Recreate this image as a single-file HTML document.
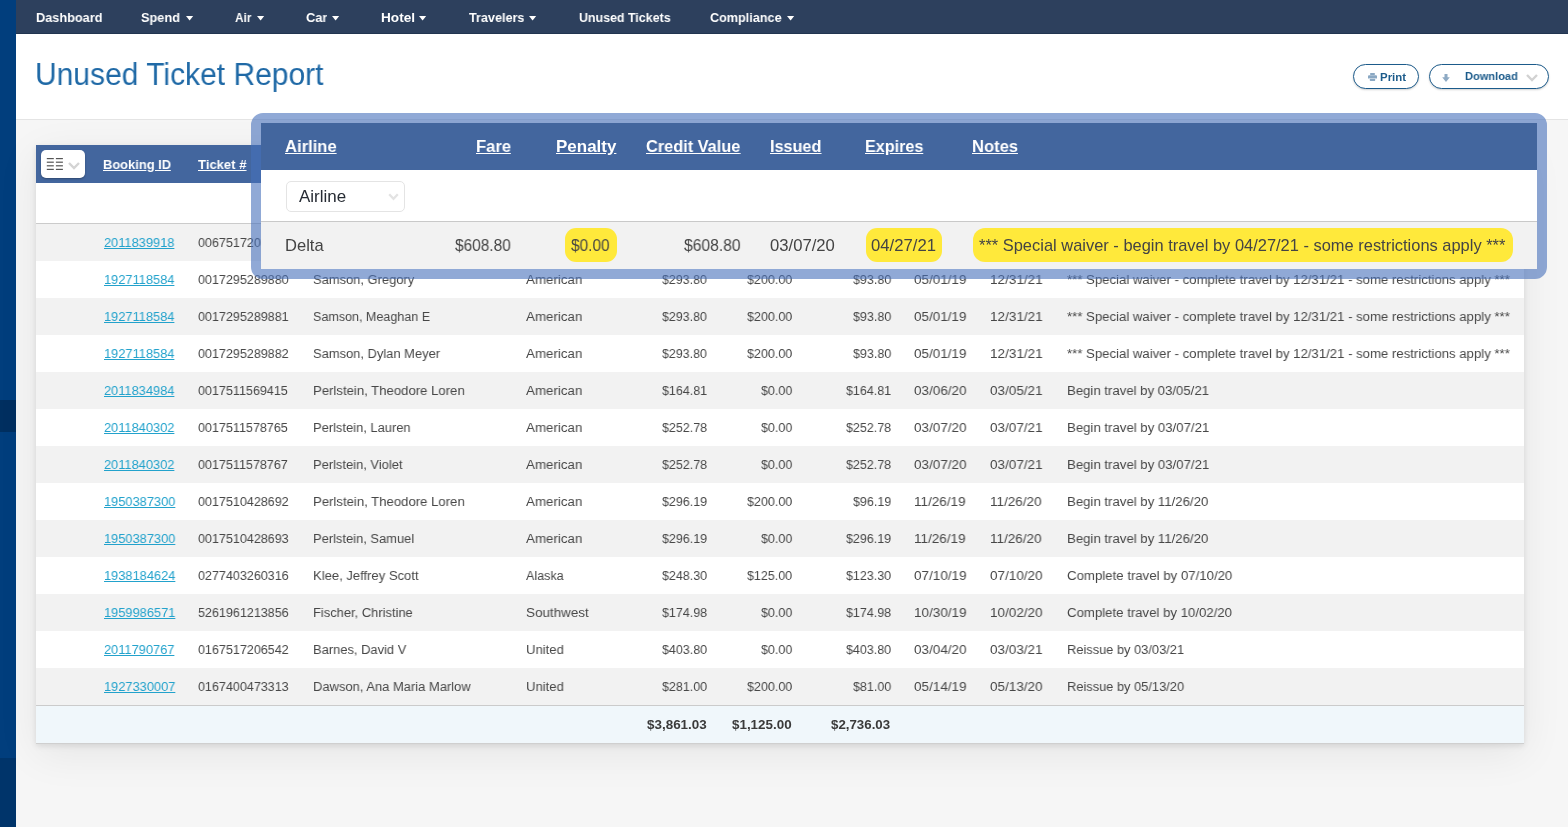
<!DOCTYPE html>
<html><head><meta charset="utf-8"><style>
html,body{margin:0;padding:0;}
body{width:1568px;height:827px;overflow:hidden;position:relative;background:#f6f6f6;font-family:"Liberation Sans",sans-serif;}
.b{position:absolute;}
.t{position:absolute;white-space:nowrap;transform-origin:0 0;will-change:transform;}
</style></head><body>
<div class="b" style="left:0px;top:0px;width:16px;height:827px;background:#013e7d;"></div>
<div class="b" style="left:0px;top:400px;width:16px;height:32px;background:#002f60;"></div>
<div class="b" style="left:0px;top:758px;width:16px;height:69px;background:#00346a;"></div>
<div class="b" style="left:16px;top:0px;width:1552px;height:34px;background:#2d405d;"></div>
<div class="b" style="left:16px;top:33px;width:1552px;height:1px;background:#213550;"></div>
<div class="b" style="left:16px;top:34px;width:1552px;height:85px;background:#fff;"></div>
<div class="b" style="left:16px;top:119px;width:1552px;height:1px;background:#e4e4e4;"></div>
<span class="t" id="t0" style="left:35.56px;top:10.95px;font-size:13.2px;line-height:14.747px;color:#ffffff;font-weight:bold;transform:scaleX(0.9658);">Dashboard</span>
<span class="t" id="t1" style="left:141.24px;top:10.95px;font-size:13.2px;line-height:14.747px;color:#ffffff;font-weight:bold;transform:scaleX(0.9668);">Spend</span>
<svg class="b" style="left:185.5px;top:16px" width="8" height="5" viewBox="0 0 8 5"><path d="M0 0H7.2L3.6 4.6Z" fill="#fff"/></svg>
<span class="t" id="t2" style="left:234.72px;top:10.95px;font-size:13.2px;line-height:14.747px;color:#ffffff;font-weight:bold;transform:scaleX(0.8972);">Air</span>
<svg class="b" style="left:256.5px;top:16px" width="8" height="5" viewBox="0 0 8 5"><path d="M0 0H7.2L3.6 4.6Z" fill="#fff"/></svg>
<span class="t" id="t3" style="left:305.67px;top:10.95px;font-size:13.2px;line-height:14.747px;color:#ffffff;font-weight:bold;transform:scaleX(0.9728);">Car</span>
<svg class="b" style="left:331.9px;top:16px" width="8" height="5" viewBox="0 0 8 5"><path d="M0 0H7.2L3.6 4.6Z" fill="#fff"/></svg>
<span class="t" id="t4" style="left:380.60px;top:10.95px;font-size:13.2px;line-height:14.747px;color:#ffffff;font-weight:bold;transform:scaleX(1.0319);">Hotel</span>
<svg class="b" style="left:419.3px;top:16px" width="8" height="5" viewBox="0 0 8 5"><path d="M0 0H7.2L3.6 4.6Z" fill="#fff"/></svg>
<span class="t" id="t5" style="left:468.86px;top:10.95px;font-size:13.2px;line-height:14.747px;color:#ffffff;font-weight:bold;transform:scaleX(0.9563);">Travelers</span>
<svg class="b" style="left:529.0px;top:16px" width="8" height="5" viewBox="0 0 8 5"><path d="M0 0H7.2L3.6 4.6Z" fill="#fff"/></svg>
<span class="t" id="t6" style="left:578.55px;top:10.95px;font-size:13.2px;line-height:14.747px;color:#ffffff;font-weight:bold;transform:scaleX(0.9416);">Unused Tickets</span>
<span class="t" id="t7" style="left:709.78px;top:10.95px;font-size:13.2px;line-height:14.747px;color:#ffffff;font-weight:bold;transform:scaleX(0.9576);">Compliance</span>
<svg class="b" style="left:786.8px;top:16px" width="8" height="5" viewBox="0 0 8 5"><path d="M0 0H7.2L3.6 4.6Z" fill="#fff"/></svg>
<span class="t" id="t8" style="left:34.69px;top:57.92px;font-size:30.8px;line-height:34.409px;color:#1f69a6;transform:scaleX(0.9742);">Unused Ticket Report</span>
<div class="b" style="left:1353px;top:64px;width:66px;height:25px;box-sizing:border-box;border:1px solid #1c5b8b;border-radius:13px;background:#fff;box-shadow:0 1px 2px rgba(0,0,0,0.18);"></div>
<svg class="b" style="left:1367.5px;top:73px" width="9" height="8" viewBox="0 0 9 8"><path d="M2.2 0H6.8V2.1H2.2Z M1 2.3H8Q9 2.3 9 3.3V5.6H7.4V4.9H1.6V5.6H0V3.3Q0 2.3 1 2.3Z M1.8 5.5H7.2V7.3Q7.2 8 6.5 8H2.5Q1.8 8 1.8 7.3Z" fill="#8aa8c3"/></svg>
<span class="t" id="t9" style="left:1380.14px;top:70.58px;font-size:11.4px;line-height:12.736px;color:#1c5b8b;font-weight:bold;transform:scaleX(1.0048);">Print</span>
<div class="b" style="left:1429px;top:64px;width:120px;height:25px;box-sizing:border-box;border:1px solid #1c5b8b;border-radius:13px;background:#fff;box-shadow:0 1px 2px rgba(0,0,0,0.18);"></div>
<svg class="b" style="left:1442px;top:74px" width="8" height="8" viewBox="0 0 8 8"><path d="M2.5 0H5.5V3.3H7.8L4 8L0.2 3.3H2.5Z" fill="#8eaac4"/></svg>
<span class="t" id="t10" style="left:1465.07px;top:69.58px;font-size:11.4px;line-height:12.736px;color:#1c5b8b;font-weight:bold;transform:scaleX(0.9705);">Download</span>
<svg class="b" style="left:1526px;top:73.5px" width="12" height="8" viewBox="0 0 12 8"><path d="M1 1L6 6L11 1" fill="none" stroke="#d2d2d2" stroke-width="2.4"/></svg>
<div class="b" style="left:36px;top:145px;width:1488px;height:599px;background:#fff;box-shadow:0 2px 6px rgba(0,0,0,0.10),0 10px 40px rgba(0,0,0,0.07);"></div>
<div class="b" style="left:36px;top:145px;width:1488px;height:38px;background:#43669e;"></div>
<div class="b" style="left:41px;top:150px;width:44px;height:28px;background:#fff;border-radius:5px;box-shadow:0 1px 2px rgba(0,0,0,0.3);"></div>
<svg class="b" style="left:46px;top:158px" width="18" height="12" viewBox="0 0 18 12"><rect x="0.8" y="0" width="7" height="1.2" fill="#555"/><rect x="9.9" y="0" width="7" height="1.2" fill="#555"/><rect x="0.8" y="3.6" width="7" height="1.2" fill="#555"/><rect x="9.9" y="3.6" width="7" height="1.2" fill="#555"/><rect x="0.8" y="7.2" width="7" height="1.2" fill="#555"/><rect x="9.9" y="7.2" width="7" height="1.2" fill="#555"/><rect x="0.8" y="10.8" width="7" height="1.2" fill="#555"/><rect x="9.9" y="10.8" width="7" height="1.2" fill="#555"/></svg>
<svg class="b" style="left:68px;top:161.5px" width="12" height="8" viewBox="0 0 12 8"><path d="M1 1L6 6L11 1" fill="none" stroke="#d4d4d4" stroke-width="2.4"/></svg>
<span class="t" id="t11" style="left:103.25px;top:157.87px;font-size:13.4px;line-height:14.970px;color:#fff;font-weight:bold;transform:scaleX(0.9628);text-decoration:underline;">Booking ID</span>
<span class="t" id="t12" style="left:197.96px;top:157.87px;font-size:13.4px;line-height:14.970px;color:#fff;font-weight:bold;transform:scaleX(0.9754);text-decoration:underline;">Ticket #</span>
<div class="b" style="left:36px;top:223px;width:1488px;height:1px;background:#cbcbcb;"></div>
<div class="b" style="left:36px;top:224px;width:1488px;height:37px;background:#f2f2f2;"></div>
<span class="t" id="t13" style="left:103.82px;top:235.30px;font-size:13.7px;line-height:15.305px;color:#22a2cc;transform:scaleX(0.9372);text-decoration:underline;">2011839918</span>
<span class="t" id="t14" style="left:198.01px;top:235.30px;font-size:13.7px;line-height:15.305px;color:#474747;transform:scaleX(0.9166);">0067517206543</span>
<span class="t" id="t15" style="left:313.02px;top:235.30px;font-size:13.7px;line-height:15.305px;color:#474747;transform:scaleX(0.9437);">Pennington, Carl</span>
<span class="t" id="t16" style="left:526.17px;top:235.30px;font-size:13.7px;line-height:15.305px;color:#474747;transform:scaleX(0.9569);">Delta</span>
<span class="t" id="t17" style="left:661.75px;top:235.30px;font-size:13.7px;line-height:15.305px;color:#474747;transform:scaleX(0.9132);">$608.80</span>
<span class="t" id="t18" style="left:760.97px;top:235.30px;font-size:13.7px;line-height:15.305px;color:#474747;transform:scaleX(0.9132);">$0.00</span>
<span class="t" id="t19" style="left:845.96px;top:235.30px;font-size:13.7px;line-height:15.305px;color:#474747;transform:scaleX(0.9132);">$608.80</span>
<span class="t" id="t20" style="left:914.47px;top:235.30px;font-size:13.7px;line-height:15.305px;color:#474747;transform:scaleX(0.9859);">03/07/20</span>
<span class="t" id="t21" style="left:989.97px;top:235.30px;font-size:13.7px;line-height:15.305px;color:#474747;transform:scaleX(0.9859);">04/27/21</span>
<span class="t" id="t22" style="left:1066.99px;top:235.30px;font-size:13.7px;line-height:15.305px;color:#474747;transform:scaleX(0.9621);">*** Special waiver - begin travel by 04/27/21 - some restrictions apply ***</span>
<div class="b" style="left:36px;top:261px;width:1488px;height:37px;background:#fff;"></div>
<span class="t" id="t23" style="left:103.82px;top:272.30px;font-size:13.7px;line-height:15.305px;color:#22a2cc;transform:scaleX(0.9372);text-decoration:underline;">1927118584</span>
<span class="t" id="t24" style="left:198.01px;top:272.30px;font-size:13.7px;line-height:15.305px;color:#474747;transform:scaleX(0.9166);">0017295289880</span>
<span class="t" id="t25" style="left:313.02px;top:272.30px;font-size:13.7px;line-height:15.305px;color:#474747;transform:scaleX(0.9437);">Samson, Gregory</span>
<span class="t" id="t26" style="left:526.17px;top:272.30px;font-size:13.7px;line-height:15.305px;color:#474747;transform:scaleX(0.9743);">American</span>
<span class="t" id="t27" style="left:661.98px;top:272.30px;font-size:13.7px;line-height:15.305px;color:#474747;transform:scaleX(0.9086);">$293.80</span>
<span class="t" id="t28" style="left:746.87px;top:272.30px;font-size:13.7px;line-height:15.305px;color:#474747;transform:scaleX(0.9168);">$200.00</span>
<span class="t" id="t29" style="left:852.87px;top:272.30px;font-size:13.7px;line-height:15.305px;color:#474747;transform:scaleX(0.9142);">$93.80</span>
<span class="t" id="t30" style="left:914.47px;top:272.30px;font-size:13.7px;line-height:15.305px;color:#474747;transform:scaleX(0.9838);">05/01/19</span>
<span class="t" id="t31" style="left:989.97px;top:272.30px;font-size:13.7px;line-height:15.305px;color:#474747;transform:scaleX(0.9880);">12/31/21</span>
<span class="t" id="t32" style="left:1066.99px;top:272.30px;font-size:13.7px;line-height:15.305px;color:#474747;transform:scaleX(0.9621);">*** Special waiver - complete travel by 12/31/21 - some restrictions apply ***</span>
<div class="b" style="left:36px;top:298px;width:1488px;height:37px;background:#f2f2f2;"></div>
<span class="t" id="t33" style="left:103.82px;top:309.30px;font-size:13.7px;line-height:15.305px;color:#22a2cc;transform:scaleX(0.9372);text-decoration:underline;">1927118584</span>
<span class="t" id="t34" style="left:198.01px;top:309.30px;font-size:13.7px;line-height:15.305px;color:#474747;transform:scaleX(0.9166);">0017295289881</span>
<span class="t" id="t35" style="left:313.04px;top:309.30px;font-size:13.7px;line-height:15.305px;color:#474747;transform:scaleX(0.9160);">Samson, Meaghan E</span>
<span class="t" id="t36" style="left:526.17px;top:309.30px;font-size:13.7px;line-height:15.305px;color:#474747;transform:scaleX(0.9743);">American</span>
<span class="t" id="t37" style="left:661.98px;top:309.30px;font-size:13.7px;line-height:15.305px;color:#474747;transform:scaleX(0.9086);">$293.80</span>
<span class="t" id="t38" style="left:746.87px;top:309.30px;font-size:13.7px;line-height:15.305px;color:#474747;transform:scaleX(0.9168);">$200.00</span>
<span class="t" id="t39" style="left:852.87px;top:309.30px;font-size:13.7px;line-height:15.305px;color:#474747;transform:scaleX(0.9142);">$93.80</span>
<span class="t" id="t40" style="left:914.47px;top:309.30px;font-size:13.7px;line-height:15.305px;color:#474747;transform:scaleX(0.9838);">05/01/19</span>
<span class="t" id="t41" style="left:989.97px;top:309.30px;font-size:13.7px;line-height:15.305px;color:#474747;transform:scaleX(0.9880);">12/31/21</span>
<span class="t" id="t42" style="left:1066.99px;top:309.30px;font-size:13.7px;line-height:15.305px;color:#474747;transform:scaleX(0.9621);">*** Special waiver - complete travel by 12/31/21 - some restrictions apply ***</span>
<div class="b" style="left:36px;top:335px;width:1488px;height:37px;background:#fff;"></div>
<span class="t" id="t43" style="left:103.82px;top:346.30px;font-size:13.7px;line-height:15.305px;color:#22a2cc;transform:scaleX(0.9372);text-decoration:underline;">1927118584</span>
<span class="t" id="t44" style="left:198.01px;top:346.30px;font-size:13.7px;line-height:15.305px;color:#474747;transform:scaleX(0.9166);">0017295289882</span>
<span class="t" id="t45" style="left:313.02px;top:346.30px;font-size:13.7px;line-height:15.305px;color:#474747;transform:scaleX(0.9437);">Samson, Dylan Meyer</span>
<span class="t" id="t46" style="left:526.17px;top:346.30px;font-size:13.7px;line-height:15.305px;color:#474747;transform:scaleX(0.9743);">American</span>
<span class="t" id="t47" style="left:661.98px;top:346.30px;font-size:13.7px;line-height:15.305px;color:#474747;transform:scaleX(0.9086);">$293.80</span>
<span class="t" id="t48" style="left:746.87px;top:346.30px;font-size:13.7px;line-height:15.305px;color:#474747;transform:scaleX(0.9168);">$200.00</span>
<span class="t" id="t49" style="left:852.87px;top:346.30px;font-size:13.7px;line-height:15.305px;color:#474747;transform:scaleX(0.9142);">$93.80</span>
<span class="t" id="t50" style="left:914.47px;top:346.30px;font-size:13.7px;line-height:15.305px;color:#474747;transform:scaleX(0.9838);">05/01/19</span>
<span class="t" id="t51" style="left:989.97px;top:346.30px;font-size:13.7px;line-height:15.305px;color:#474747;transform:scaleX(0.9880);">12/31/21</span>
<span class="t" id="t52" style="left:1066.99px;top:346.30px;font-size:13.7px;line-height:15.305px;color:#474747;transform:scaleX(0.9621);">*** Special waiver - complete travel by 12/31/21 - some restrictions apply ***</span>
<div class="b" style="left:36px;top:372px;width:1488px;height:37px;background:#f2f2f2;"></div>
<span class="t" id="t53" style="left:103.82px;top:383.30px;font-size:13.7px;line-height:15.305px;color:#22a2cc;transform:scaleX(0.9372);text-decoration:underline;">2011834984</span>
<span class="t" id="t54" style="left:198.01px;top:383.30px;font-size:13.7px;line-height:15.305px;color:#474747;transform:scaleX(0.9166);">0017511569415</span>
<span class="t" id="t55" style="left:313.01px;top:383.30px;font-size:13.7px;line-height:15.305px;color:#474747;transform:scaleX(0.9600);">Perlstein, Theodore Loren</span>
<span class="t" id="t56" style="left:526.17px;top:383.30px;font-size:13.7px;line-height:15.305px;color:#474747;transform:scaleX(0.9743);">American</span>
<span class="t" id="t57" style="left:661.75px;top:383.30px;font-size:13.7px;line-height:15.305px;color:#474747;transform:scaleX(0.9132);">$164.81</span>
<span class="t" id="t58" style="left:760.97px;top:383.30px;font-size:13.7px;line-height:15.305px;color:#474747;transform:scaleX(0.9132);">$0.00</span>
<span class="t" id="t59" style="left:845.96px;top:383.30px;font-size:13.7px;line-height:15.305px;color:#474747;transform:scaleX(0.9132);">$164.81</span>
<span class="t" id="t60" style="left:914.47px;top:383.30px;font-size:13.7px;line-height:15.305px;color:#474747;transform:scaleX(0.9859);">03/06/20</span>
<span class="t" id="t61" style="left:989.97px;top:383.30px;font-size:13.7px;line-height:15.305px;color:#474747;transform:scaleX(0.9859);">03/05/21</span>
<span class="t" id="t62" style="left:1066.99px;top:383.30px;font-size:13.7px;line-height:15.305px;color:#474747;transform:scaleX(0.9618);">Begin travel by 03/05/21</span>
<div class="b" style="left:36px;top:409px;width:1488px;height:37px;background:#fff;"></div>
<span class="t" id="t63" style="left:103.82px;top:420.30px;font-size:13.7px;line-height:15.305px;color:#22a2cc;transform:scaleX(0.9372);text-decoration:underline;">2011840302</span>
<span class="t" id="t64" style="left:198.01px;top:420.30px;font-size:13.7px;line-height:15.305px;color:#474747;transform:scaleX(0.9166);">0017511578765</span>
<span class="t" id="t65" style="left:313.02px;top:420.30px;font-size:13.7px;line-height:15.305px;color:#474747;transform:scaleX(0.9437);">Perlstein, Lauren</span>
<span class="t" id="t66" style="left:526.17px;top:420.30px;font-size:13.7px;line-height:15.305px;color:#474747;transform:scaleX(0.9743);">American</span>
<span class="t" id="t67" style="left:661.75px;top:420.30px;font-size:13.7px;line-height:15.305px;color:#474747;transform:scaleX(0.9132);">$252.78</span>
<span class="t" id="t68" style="left:760.97px;top:420.30px;font-size:13.7px;line-height:15.305px;color:#474747;transform:scaleX(0.9132);">$0.00</span>
<span class="t" id="t69" style="left:845.96px;top:420.30px;font-size:13.7px;line-height:15.305px;color:#474747;transform:scaleX(0.9132);">$252.78</span>
<span class="t" id="t70" style="left:914.47px;top:420.30px;font-size:13.7px;line-height:15.305px;color:#474747;transform:scaleX(0.9859);">03/07/20</span>
<span class="t" id="t71" style="left:989.97px;top:420.30px;font-size:13.7px;line-height:15.305px;color:#474747;transform:scaleX(0.9859);">03/07/21</span>
<span class="t" id="t72" style="left:1066.99px;top:420.30px;font-size:13.7px;line-height:15.305px;color:#474747;transform:scaleX(0.9637);">Begin travel by 03/07/21</span>
<div class="b" style="left:36px;top:446px;width:1488px;height:37px;background:#f2f2f2;"></div>
<span class="t" id="t73" style="left:103.82px;top:457.30px;font-size:13.7px;line-height:15.305px;color:#22a2cc;transform:scaleX(0.9372);text-decoration:underline;">2011840302</span>
<span class="t" id="t74" style="left:198.01px;top:457.30px;font-size:13.7px;line-height:15.305px;color:#474747;transform:scaleX(0.9166);">0017511578767</span>
<span class="t" id="t75" style="left:313.02px;top:457.30px;font-size:13.7px;line-height:15.305px;color:#474747;transform:scaleX(0.9437);">Perlstein, Violet</span>
<span class="t" id="t76" style="left:526.17px;top:457.30px;font-size:13.7px;line-height:15.305px;color:#474747;transform:scaleX(0.9743);">American</span>
<span class="t" id="t77" style="left:661.75px;top:457.30px;font-size:13.7px;line-height:15.305px;color:#474747;transform:scaleX(0.9132);">$252.78</span>
<span class="t" id="t78" style="left:760.97px;top:457.30px;font-size:13.7px;line-height:15.305px;color:#474747;transform:scaleX(0.9132);">$0.00</span>
<span class="t" id="t79" style="left:845.96px;top:457.30px;font-size:13.7px;line-height:15.305px;color:#474747;transform:scaleX(0.9132);">$252.78</span>
<span class="t" id="t80" style="left:914.47px;top:457.30px;font-size:13.7px;line-height:15.305px;color:#474747;transform:scaleX(0.9859);">03/07/20</span>
<span class="t" id="t81" style="left:989.97px;top:457.30px;font-size:13.7px;line-height:15.305px;color:#474747;transform:scaleX(0.9859);">03/07/21</span>
<span class="t" id="t82" style="left:1066.99px;top:457.30px;font-size:13.7px;line-height:15.305px;color:#474747;transform:scaleX(0.9637);">Begin travel by 03/07/21</span>
<div class="b" style="left:36px;top:483px;width:1488px;height:37px;background:#fff;"></div>
<span class="t" id="t83" style="left:103.82px;top:494.30px;font-size:13.7px;line-height:15.305px;color:#22a2cc;transform:scaleX(0.9372);text-decoration:underline;">1950387300</span>
<span class="t" id="t84" style="left:198.01px;top:494.30px;font-size:13.7px;line-height:15.305px;color:#474747;transform:scaleX(0.9166);">0017510428692</span>
<span class="t" id="t85" style="left:313.01px;top:494.30px;font-size:13.7px;line-height:15.305px;color:#474747;transform:scaleX(0.9600);">Perlstein, Theodore Loren</span>
<span class="t" id="t86" style="left:526.17px;top:494.30px;font-size:13.7px;line-height:15.305px;color:#474747;transform:scaleX(0.9743);">American</span>
<span class="t" id="t87" style="left:661.75px;top:494.30px;font-size:13.7px;line-height:15.305px;color:#474747;transform:scaleX(0.9132);">$296.19</span>
<span class="t" id="t88" style="left:746.87px;top:494.30px;font-size:13.7px;line-height:15.305px;color:#474747;transform:scaleX(0.9168);">$200.00</span>
<span class="t" id="t89" style="left:852.92px;top:494.30px;font-size:13.7px;line-height:15.305px;color:#474747;transform:scaleX(0.9132);">$96.19</span>
<span class="t" id="t90" style="left:914.47px;top:494.30px;font-size:13.7px;line-height:15.305px;color:#474747;transform:scaleX(0.9859);">11/26/19</span>
<span class="t" id="t91" style="left:989.97px;top:494.30px;font-size:13.7px;line-height:15.305px;color:#474747;transform:scaleX(0.9859);">11/26/20</span>
<span class="t" id="t92" style="left:1066.99px;top:494.30px;font-size:13.7px;line-height:15.305px;color:#474747;transform:scaleX(0.9637);">Begin travel by 11/26/20</span>
<div class="b" style="left:36px;top:520px;width:1488px;height:37px;background:#f2f2f2;"></div>
<span class="t" id="t93" style="left:103.82px;top:531.30px;font-size:13.7px;line-height:15.305px;color:#22a2cc;transform:scaleX(0.9372);text-decoration:underline;">1950387300</span>
<span class="t" id="t94" style="left:198.01px;top:531.30px;font-size:13.7px;line-height:15.305px;color:#474747;transform:scaleX(0.9166);">0017510428693</span>
<span class="t" id="t95" style="left:313.02px;top:531.30px;font-size:13.7px;line-height:15.305px;color:#474747;transform:scaleX(0.9437);">Perlstein, Samuel</span>
<span class="t" id="t96" style="left:526.17px;top:531.30px;font-size:13.7px;line-height:15.305px;color:#474747;transform:scaleX(0.9743);">American</span>
<span class="t" id="t97" style="left:661.75px;top:531.30px;font-size:13.7px;line-height:15.305px;color:#474747;transform:scaleX(0.9132);">$296.19</span>
<span class="t" id="t98" style="left:760.97px;top:531.30px;font-size:13.7px;line-height:15.305px;color:#474747;transform:scaleX(0.9132);">$0.00</span>
<span class="t" id="t99" style="left:845.96px;top:531.30px;font-size:13.7px;line-height:15.305px;color:#474747;transform:scaleX(0.9132);">$296.19</span>
<span class="t" id="t100" style="left:914.47px;top:531.30px;font-size:13.7px;line-height:15.305px;color:#474747;transform:scaleX(0.9859);">11/26/19</span>
<span class="t" id="t101" style="left:989.97px;top:531.30px;font-size:13.7px;line-height:15.305px;color:#474747;transform:scaleX(0.9859);">11/26/20</span>
<span class="t" id="t102" style="left:1066.99px;top:531.30px;font-size:13.7px;line-height:15.305px;color:#474747;transform:scaleX(0.9637);">Begin travel by 11/26/20</span>
<div class="b" style="left:36px;top:557px;width:1488px;height:37px;background:#fff;"></div>
<span class="t" id="t103" style="left:103.82px;top:568.30px;font-size:13.7px;line-height:15.305px;color:#22a2cc;transform:scaleX(0.9372);text-decoration:underline;">1938184624</span>
<span class="t" id="t104" style="left:198.01px;top:568.30px;font-size:13.7px;line-height:15.305px;color:#474747;transform:scaleX(0.9166);">0277403260316</span>
<span class="t" id="t105" style="left:313.01px;top:568.30px;font-size:13.7px;line-height:15.305px;color:#474747;transform:scaleX(0.9525);">Klee, Jeffrey Scott</span>
<span class="t" id="t106" style="left:526.17px;top:568.30px;font-size:13.7px;line-height:15.305px;color:#474747;transform:scaleX(0.9148);">Alaska</span>
<span class="t" id="t107" style="left:661.75px;top:568.30px;font-size:13.7px;line-height:15.305px;color:#474747;transform:scaleX(0.9132);">$248.30</span>
<span class="t" id="t108" style="left:747.05px;top:568.30px;font-size:13.7px;line-height:15.305px;color:#474747;transform:scaleX(0.9132);">$125.00</span>
<span class="t" id="t109" style="left:845.96px;top:568.30px;font-size:13.7px;line-height:15.305px;color:#474747;transform:scaleX(0.9132);">$123.30</span>
<span class="t" id="t110" style="left:914.47px;top:568.30px;font-size:13.7px;line-height:15.305px;color:#474747;transform:scaleX(0.9859);">07/10/19</span>
<span class="t" id="t111" style="left:989.97px;top:568.30px;font-size:13.7px;line-height:15.305px;color:#474747;transform:scaleX(0.9859);">07/10/20</span>
<span class="t" id="t112" style="left:1066.99px;top:568.30px;font-size:13.7px;line-height:15.305px;color:#474747;transform:scaleX(0.9657);">Complete travel by 07/10/20</span>
<div class="b" style="left:36px;top:594px;width:1488px;height:37px;background:#f2f2f2;"></div>
<span class="t" id="t113" style="left:103.82px;top:605.30px;font-size:13.7px;line-height:15.305px;color:#22a2cc;transform:scaleX(0.9372);text-decoration:underline;">1959986571</span>
<span class="t" id="t114" style="left:198.01px;top:605.30px;font-size:13.7px;line-height:15.305px;color:#474747;transform:scaleX(0.9166);">5261961213856</span>
<span class="t" id="t115" style="left:313.02px;top:605.30px;font-size:13.7px;line-height:15.305px;color:#474747;transform:scaleX(0.9437);">Fischer, Christine</span>
<span class="t" id="t116" style="left:526.17px;top:605.30px;font-size:13.7px;line-height:15.305px;color:#474747;transform:scaleX(0.9816);">Southwest</span>
<span class="t" id="t117" style="left:661.75px;top:605.30px;font-size:13.7px;line-height:15.305px;color:#474747;transform:scaleX(0.9132);">$174.98</span>
<span class="t" id="t118" style="left:760.97px;top:605.30px;font-size:13.7px;line-height:15.305px;color:#474747;transform:scaleX(0.9132);">$0.00</span>
<span class="t" id="t119" style="left:845.96px;top:605.30px;font-size:13.7px;line-height:15.305px;color:#474747;transform:scaleX(0.9132);">$174.98</span>
<span class="t" id="t120" style="left:914.47px;top:605.30px;font-size:13.7px;line-height:15.305px;color:#474747;transform:scaleX(0.9859);">10/30/19</span>
<span class="t" id="t121" style="left:989.97px;top:605.30px;font-size:13.7px;line-height:15.305px;color:#474747;transform:scaleX(0.9859);">10/02/20</span>
<span class="t" id="t122" style="left:1066.99px;top:605.30px;font-size:13.7px;line-height:15.305px;color:#474747;transform:scaleX(0.9637);">Complete travel by 10/02/20</span>
<div class="b" style="left:36px;top:631px;width:1488px;height:37px;background:#fff;"></div>
<span class="t" id="t123" style="left:103.82px;top:642.30px;font-size:13.7px;line-height:15.305px;color:#22a2cc;transform:scaleX(0.9372);text-decoration:underline;">2011790767</span>
<span class="t" id="t124" style="left:198.01px;top:642.30px;font-size:13.7px;line-height:15.305px;color:#474747;transform:scaleX(0.9166);">0167517206542</span>
<span class="t" id="t125" style="left:313.02px;top:642.30px;font-size:13.7px;line-height:15.305px;color:#474747;transform:scaleX(0.9437);">Barnes, David V</span>
<span class="t" id="t126" style="left:526.17px;top:642.30px;font-size:13.7px;line-height:15.305px;color:#474747;transform:scaleX(0.9569);">United</span>
<span class="t" id="t127" style="left:661.75px;top:642.30px;font-size:13.7px;line-height:15.305px;color:#474747;transform:scaleX(0.9132);">$403.80</span>
<span class="t" id="t128" style="left:760.97px;top:642.30px;font-size:13.7px;line-height:15.305px;color:#474747;transform:scaleX(0.9132);">$0.00</span>
<span class="t" id="t129" style="left:845.96px;top:642.30px;font-size:13.7px;line-height:15.305px;color:#474747;transform:scaleX(0.9132);">$403.80</span>
<span class="t" id="t130" style="left:914.47px;top:642.30px;font-size:13.7px;line-height:15.305px;color:#474747;transform:scaleX(0.9859);">03/04/20</span>
<span class="t" id="t131" style="left:989.97px;top:642.30px;font-size:13.7px;line-height:15.305px;color:#474747;transform:scaleX(0.9859);">03/03/21</span>
<span class="t" id="t132" style="left:1066.99px;top:642.30px;font-size:13.7px;line-height:15.305px;color:#474747;transform:scaleX(0.9381);">Reissue by 03/03/21</span>
<div class="b" style="left:36px;top:668px;width:1488px;height:37px;background:#f2f2f2;"></div>
<span class="t" id="t133" style="left:103.82px;top:679.30px;font-size:13.7px;line-height:15.305px;color:#22a2cc;transform:scaleX(0.9372);text-decoration:underline;">1927330007</span>
<span class="t" id="t134" style="left:198.01px;top:679.30px;font-size:13.7px;line-height:15.305px;color:#474747;transform:scaleX(0.9166);">0167400473313</span>
<span class="t" id="t135" style="left:313.02px;top:679.30px;font-size:13.7px;line-height:15.305px;color:#474747;transform:scaleX(0.9465);">Dawson, Ana Maria Marlow</span>
<span class="t" id="t136" style="left:526.17px;top:679.30px;font-size:13.7px;line-height:15.305px;color:#474747;transform:scaleX(0.9569);">United</span>
<span class="t" id="t137" style="left:661.75px;top:679.30px;font-size:13.7px;line-height:15.305px;color:#474747;transform:scaleX(0.9132);">$281.00</span>
<span class="t" id="t138" style="left:746.87px;top:679.30px;font-size:13.7px;line-height:15.305px;color:#474747;transform:scaleX(0.9168);">$200.00</span>
<span class="t" id="t139" style="left:852.92px;top:679.30px;font-size:13.7px;line-height:15.305px;color:#474747;transform:scaleX(0.9132);">$81.00</span>
<span class="t" id="t140" style="left:914.47px;top:679.30px;font-size:13.7px;line-height:15.305px;color:#474747;transform:scaleX(0.9859);">05/14/19</span>
<span class="t" id="t141" style="left:989.97px;top:679.30px;font-size:13.7px;line-height:15.305px;color:#474747;transform:scaleX(0.9859);">05/13/20</span>
<span class="t" id="t142" style="left:1066.99px;top:679.30px;font-size:13.7px;line-height:15.305px;color:#474747;transform:scaleX(0.9381);">Reissue by 05/13/20</span>
<div class="b" style="left:36px;top:705px;width:1488px;height:1px;background:#cbcbcb;"></div>
<div class="b" style="left:36px;top:706px;width:1488px;height:37px;background:#f0f7fb;"></div>
<div class="b" style="left:36px;top:743px;width:1488px;height:1px;background:#cfcfcf;"></div>
<span class="t" id="t143" style="left:647.03px;top:717.91px;font-size:12.8px;line-height:14.300px;color:#3a3a3a;font-weight:bold;transform:scaleX(1.0491);">$3,861.03</span>
<span class="t" id="t144" style="left:732.33px;top:717.91px;font-size:12.8px;line-height:14.300px;color:#3a3a3a;font-weight:bold;transform:scaleX(1.0468);">$1,125.00</span>
<span class="t" id="t145" style="left:831.33px;top:717.91px;font-size:12.8px;line-height:14.300px;color:#3a3a3a;font-weight:bold;transform:scaleX(1.0385);">$2,736.03</span>
<div class="b" style="left:251px;top:113px;width:1296px;height:166px;box-sizing:border-box;border:10px solid rgba(70,112,186,0.6);border-radius:12px;"></div>
<div class="b" style="left:261px;top:123px;width:1276px;height:146px;background:#f2f2f2;"></div>
<div class="b" style="left:261px;top:123px;width:1276px;height:47px;background:#43669e;"></div>
<div class="b" style="left:261px;top:170px;width:1276px;height:51px;background:#fff;"></div>
<div class="b" style="left:261px;top:221px;width:1276px;height:1px;background:#c9c9c9;"></div>
<span class="t" id="t146" style="left:285.00px;top:137.80px;font-size:16.9px;line-height:18.880px;color:#fff;font-weight:bold;transform:scaleX(0.9823);text-decoration:underline;">Airline</span>
<span class="t" id="t147" style="left:475.90px;top:137.80px;font-size:16.9px;line-height:18.880px;color:#fff;font-weight:bold;transform:scaleX(0.9823);text-decoration:underline;">Fare</span>
<span class="t" id="t148" style="left:555.88px;top:137.80px;font-size:16.9px;line-height:18.880px;color:#fff;font-weight:bold;transform:scaleX(1.0049);text-decoration:underline;">Penalty</span>
<span class="t" id="t149" style="left:646.43px;top:137.80px;font-size:16.9px;line-height:18.880px;color:#fff;font-weight:bold;transform:scaleX(0.9656);text-decoration:underline;">Credit Value</span>
<span class="t" id="t150" style="left:769.73px;top:137.80px;font-size:16.9px;line-height:18.880px;color:#fff;font-weight:bold;transform:scaleX(0.9589);text-decoration:underline;">Issued</span>
<span class="t" id="t151" style="left:864.63px;top:137.80px;font-size:16.9px;line-height:18.880px;color:#fff;font-weight:bold;transform:scaleX(0.9550);text-decoration:underline;">Expires</span>
<span class="t" id="t152" style="left:971.81px;top:137.80px;font-size:16.9px;line-height:18.880px;color:#fff;font-weight:bold;transform:scaleX(0.9810);text-decoration:underline;">Notes</span>
<div class="b" style="left:286px;top:181px;width:119px;height:31px;box-sizing:border-box;border:1px solid #e4e4e4;border-radius:5px;background:#fff;"></div>
<span class="t" id="t153" style="left:299.37px;top:187.70px;font-size:15.8px;line-height:17.652px;color:#262b33;transform:scaleX(1.0745);">Airline</span>
<svg class="b" style="left:388px;top:193px" width="11" height="8" viewBox="0 0 11 8"><path d="M1.2 1.2L5.5 5.8L9.8 1.2" fill="none" stroke="#e3e3e3" stroke-width="2.3"/></svg>
<div class="b" style="left:565px;top:228px;width:52px;height:34px;background:#ffe93b;border-radius:11px;"></div>
<div class="b" style="left:866px;top:228px;width:76px;height:34px;background:#ffe93b;border-radius:11px;"></div>
<div class="b" style="left:973px;top:228px;width:540px;height:34px;background:#ffe93b;border-radius:12px;"></div>
<span class="t" id="t154" style="left:284.64px;top:236.13px;font-size:16.2px;line-height:18.098px;color:#444;transform:scaleX(1.0220);">Delta</span>
<span class="t" id="t155" style="left:454.65px;top:236.13px;font-size:16.2px;line-height:18.098px;color:#444;transform:scaleX(0.9535);">$608.80</span>
<span class="t" id="t156" style="left:571.25px;top:236.13px;font-size:16.2px;line-height:18.098px;color:#444;transform:scaleX(0.9533);">$0.00</span>
<span class="t" id="t157" style="left:684.14px;top:236.13px;font-size:16.2px;line-height:18.098px;color:#444;transform:scaleX(0.9674);">$608.80</span>
<span class="t" id="t158" style="left:770.35px;top:236.13px;font-size:16.2px;line-height:18.098px;color:#444;transform:scaleX(1.0291);">03/07/20</span>
<span class="t" id="t159" style="left:871.15px;top:236.13px;font-size:16.2px;line-height:18.098px;color:#444;transform:scaleX(1.0318);">04/27/21</span>
<span class="t" id="t160" style="left:979.24px;top:236.13px;font-size:16.2px;line-height:18.098px;color:#444;transform:scaleX(1.0157);">*** Special waiver - begin travel by 04/27/21 - some restrictions apply ***</span>
</body></html>
